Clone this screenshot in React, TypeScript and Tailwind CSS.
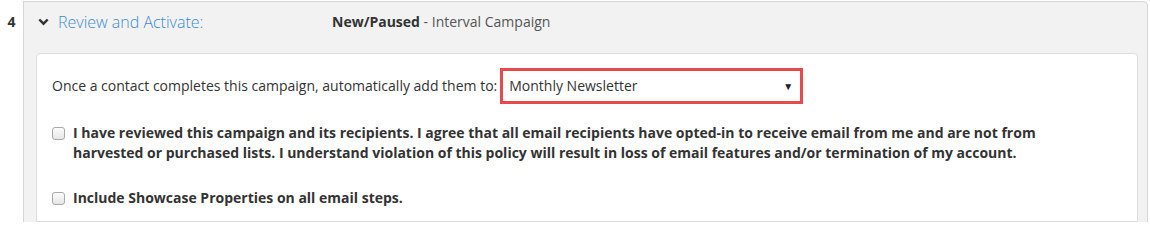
import React from "react";

const Checkbox: React.FC = () => (
  <span className="mt-[4px] block h-[13px] w-[13px] shrink-0 rounded-[3px] border border-[#a9a9a9] bg-gradient-to-b from-[#fcfcfc] to-[#e6e6e6]" />
);

export default function App() {
  return (
    <div
      className="flex h-[222px] w-[1150px] overflow-hidden bg-white text-[14px] text-[#333]"
      style={{ fontFamily: '"Open Sans", "Liberation Sans", sans-serif' }}
    >
      {/* step number */}
      <div className="w-[23px] shrink-0 pt-[12px] text-center text-[14px] font-bold leading-[20px] text-[#333]">
        4
      </div>

      {/* step panel */}
      <div className="mr-[2px] mt-[1px] flex flex-1 flex-col rounded-tr-[5px] border-l border-r border-t border-[#d6d6d6] bg-[#f2f2f2] pl-[12px] pr-[9px]">
        {/* header */}
        <div className="flex h-[39px] items-center">
          <div className="flex w-[296px] items-center pl-[2px]">
            <svg width="11" height="8" viewBox="0 0 11 8" className="mr-[9px]">
              <path d="M1.3 1.5 L5.5 5.7 L9.7 1.5" fill="none" stroke="#333" strokeWidth="2.4" />
            </svg>
            <span className="text-[16px] font-light leading-[20px] text-[#3a8cd0]">
              Review and Activate:
            </span>
          </div>
          <div className="text-[14px] leading-[20px]">
            <span className="font-bold text-[#333]">New/Paused</span>
            <span className="text-[#555]"> - Interval Campaign</span>
          </div>
        </div>

        {/* card */}
        <div className="mt-[12px] flex-1 rounded-t-[4px] border border-[#ddd] bg-white pl-[15px] pt-[14px]">
          <div className="flex items-center">
            <span className="leading-[20px]">
              Once a contact completes this campaign, automatically add them to:
            </span>
            <div className="ml-[3px] flex h-[36px] w-[303px] items-center justify-between border-[3px] border-[#e64a4a] pl-[6px] pr-[7px]">
              <span className="leading-[20px] text-[#333]">Monthly Newsletter</span>
              <span className="text-[10px] leading-none text-[#222]">▼</span>
            </div>
          </div>

          <div className="mt-[19px] flex gap-[8px]">
            <Checkbox />
            <p className="max-w-[975px] font-bold leading-[20px] text-[#333]">
              I have reviewed this campaign and its recipients. I agree that all email recipients have
              opted-in to receive email from me and are not from harvested or purchased lists. I
              understand violation of this policy will result in loss of email features and/or
              termination of my account.
            </p>
          </div>

          <div className="mt-[25px] flex gap-[8px]">
            <Checkbox />
            <p className="font-bold leading-[20px] text-[#333]">
              Include Showcase Properties on all email steps.
            </p>
          </div>
        </div>
      </div>
    </div>
  );
}
